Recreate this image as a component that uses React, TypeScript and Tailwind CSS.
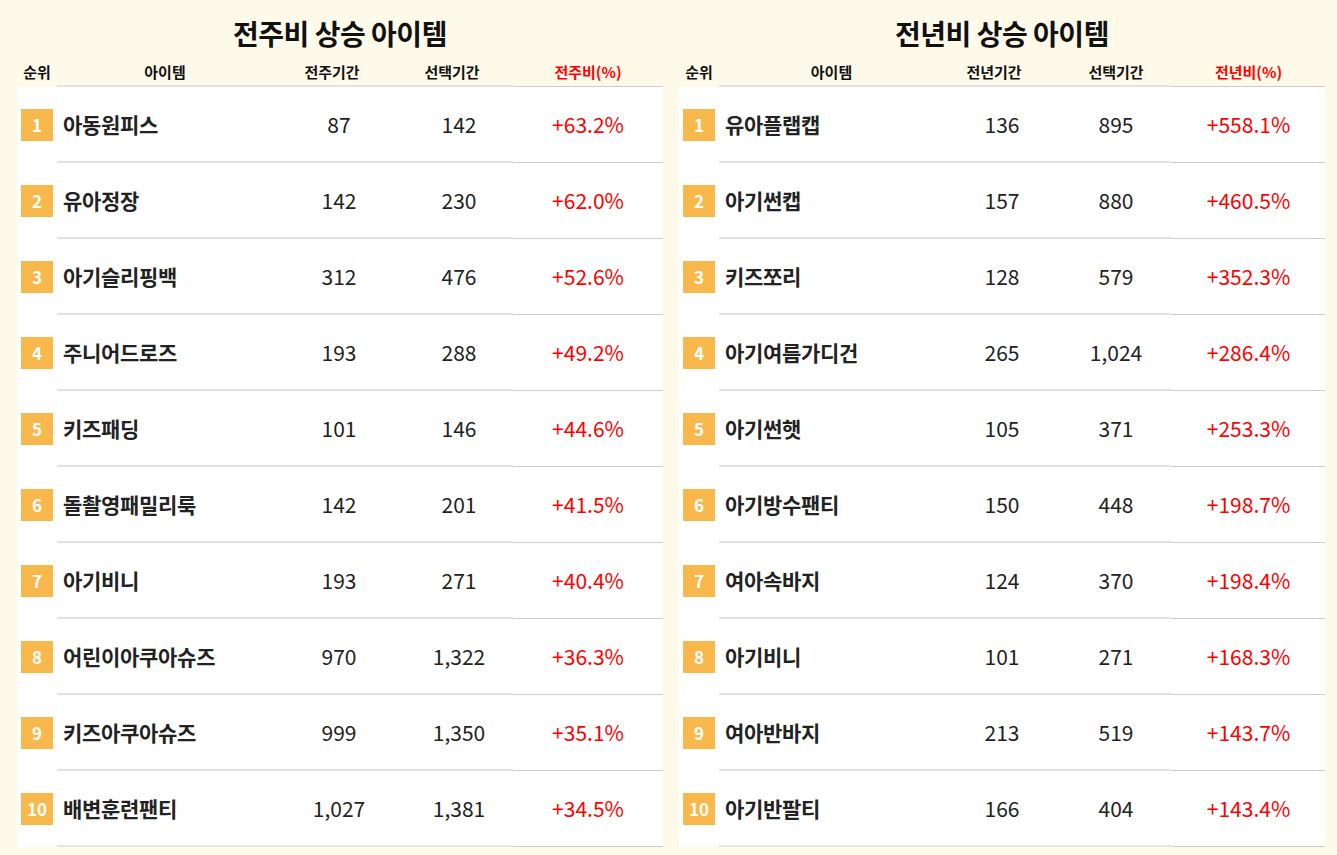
type Row = { name: string; prev: string; cur: string; rate: string };

const weekly: Row[] = [
  { name: "아동원피스", prev: "87", cur: "142", rate: "+63.2%" },
  { name: "유아정장", prev: "142", cur: "230", rate: "+62.0%" },
  { name: "아기슬리핑백", prev: "312", cur: "476", rate: "+52.6%" },
  { name: "주니어드로즈", prev: "193", cur: "288", rate: "+49.2%" },
  { name: "키즈패딩", prev: "101", cur: "146", rate: "+44.6%" },
  { name: "돌촬영패밀리룩", prev: "142", cur: "201", rate: "+41.5%" },
  { name: "아기비니", prev: "193", cur: "271", rate: "+40.4%" },
  { name: "어린이아쿠아슈즈", prev: "970", cur: "1,322", rate: "+36.3%" },
  { name: "키즈아쿠아슈즈", prev: "999", cur: "1,350", rate: "+35.1%" },
  { name: "배변훈련팬티", prev: "1,027", cur: "1,381", rate: "+34.5%" },
];

const yearly: Row[] = [
  { name: "유아플랩캡", prev: "136", cur: "895", rate: "+558.1%" },
  { name: "아기썬캡", prev: "157", cur: "880", rate: "+460.5%" },
  { name: "키즈쪼리", prev: "128", cur: "579", rate: "+352.3%" },
  { name: "아기여름가디건", prev: "265", cur: "1,024", rate: "+286.4%" },
  { name: "아기썬햇", prev: "105", cur: "371", rate: "+253.3%" },
  { name: "아기방수팬티", prev: "150", cur: "448", rate: "+198.7%" },
  { name: "여아속바지", prev: "124", cur: "370", rate: "+198.4%" },
  { name: "아기비니", prev: "101", cur: "271", rate: "+168.3%" },
  { name: "여아반바지", prev: "213", cur: "519", rate: "+143.7%" },
  { name: "아기반팔티", prev: "166", cur: "404", rate: "+143.4%" },
];

function RankTable({
  title,
  prevLabel,
  rateLabel,
  rows,
  cols,
  prevHeadPad,
  curHeadPad,
}: {
  title: string;
  prevLabel: string;
  rateLabel: string;
  rows: Row[];
  cols: string;
  prevHeadPad: string;
  curHeadPad: string;
}) {
  const line = "border-b-2 border-[#e4e4e4]";
  const rateLine = "border-b border-[#cdcdcd]";
  return (
    <section className="w-[646px]">
      <h2 className="flex h-[63px] items-center justify-center pt-[2px] text-[28px] font-bold tracking-[-0.5px] text-[#111]">
        {title}
      </h2>
      <div className={`grid ${cols}`}>
        {/* header */}
        <div className="flex h-[24px] items-center justify-center pb-[5px] text-[15px] font-bold text-[#111]">순위</div>
        <div className={`flex h-[24px] items-center justify-center pb-[3px] text-[15px] font-bold text-[#111] ${line}`}>아이템</div>
        <div className={`flex h-[24px] items-center justify-center pb-[3px] text-[15px] font-bold text-[#111] ${prevHeadPad} ${line}`}>
          {prevLabel}
        </div>
        <div className={`flex h-[24px] items-center justify-center pb-[3px] text-[15px] font-bold text-[#111] ${curHeadPad} ${line}`}>
          선택기간
        </div>
        <div className={`flex h-[24px] items-center justify-center pb-[4px] text-[15px] font-bold text-[#ff0000] ${rateLine}`}>
          {rateLabel}
        </div>

        {rows.map((r, i) => (
          <div key={r.name + i} className="contents">
            <div className="flex h-[76px] items-center justify-center bg-white">
              <span className="flex h-[32px] w-[32px] items-center justify-center bg-[#f8b84c] text-[17px] font-bold text-white">
                {i + 1}
              </span>
            </div>
            <div className={`flex h-[76px] items-center bg-white pl-[6px] pt-[1px] text-[21px] font-bold tracking-[-0.3px] text-[#222] ${line}`}>
              {r.name}
            </div>
            <div className={`flex h-[76px] items-center justify-center bg-white pt-[1px] text-[21px] text-[#222] ${line}`}>
              {r.prev}
            </div>
            <div className={`flex h-[76px] items-center justify-center bg-white pt-[1px] text-[21px] text-[#222] ${line}`}>
              {r.cur}
            </div>
            <div className={`flex h-[76px] items-center justify-center bg-white text-[21px] text-[#ff0000] ${rateLine}`}>
              {r.rate}
            </div>
          </div>
        ))}
      </div>
    </section>
  );
}

export default function App() {
  return (
    <div className="min-h-[855px] w-full bg-[#fefae9] font-['Noto_Sans_CJK_KR','Noto_Sans',sans-serif]">
      <div className="flex gap-[16px] pl-[17px]">
        <RankTable
          title="전주비 상승 아이템"
          prevLabel="전주기간"
          rateLabel="전주비(%)"
          rows={weekly}
          cols="grid-cols-[40px_216px_132px_108px_150px]"
          prevHeadPad="pr-[14px]"
          curHeadPad="pr-[14px]"
        />
        <RankTable
          title="전년비 상승 아이템"
          prevLabel="전년기간"
          rateLabel="전년비(%)"
          rows={yearly}
          cols="grid-cols-[40px_225px_116px_112px_153px]"
          prevHeadPad="pr-[16px]"
          curHeadPad="pr-0"
        />
      </div>
    </div>
  );
}
